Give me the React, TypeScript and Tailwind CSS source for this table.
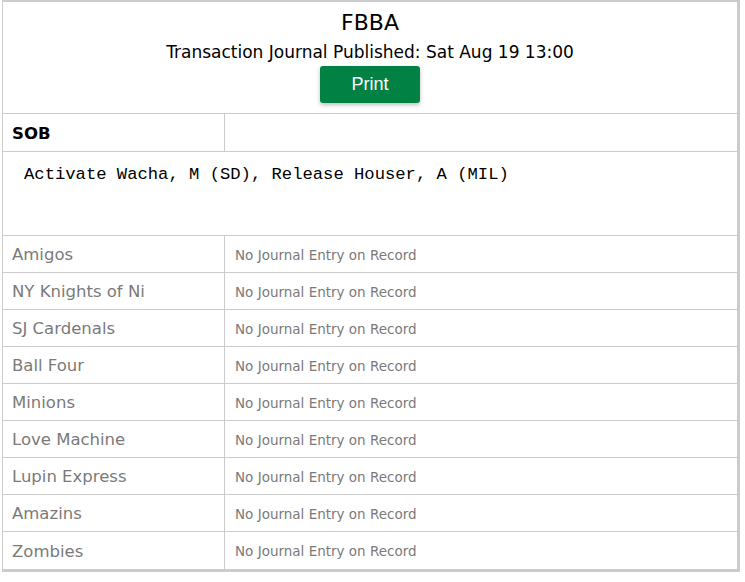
import React from "react";

const teams = [
  "Amigos",
  "NY Knights of Ni",
  "SJ Cardenals",
  "Ball Four",
  "Minions",
  "Love Machine",
  "Lupin Express",
  "Amazins",
  "Zombies",
];

export default function App() {
  return (
    <div className="w-[745px] h-[582px] bg-white" style={{ fontFamily: '"DejaVu Sans", Verdana, sans-serif' }}>
      <div className="ml-[2px] w-[738px] border-l border-t-2 border-r-[3px] border-b-[3px] border-[#cccccc] bg-white">
        <div className="h-[112px] flex flex-col items-center border-b border-[#cccccc]">
          <div className="mt-[7px] text-[22px] leading-[28px] text-black">FBBA</div>
          <div className="mt-[4px] text-[17px] leading-[22px] text-black">Transaction Journal Published: Sat Aug 19 13:00</div>
          <button
            className="mt-[3px] w-[100px] h-[37px] rounded-[3px] bg-[#018144] text-white text-[18px] shadow-[0_2px_4px_rgba(0,0,0,0.25)]"
            style={{ fontFamily: '"Liberation Sans", Arial, sans-serif' }}
          >
            Print
          </button>
        </div>
        <div className="flex h-[38px] border-b border-[#cccccc]">
          <div className="w-[222px] border-r border-[#cccccc] pl-[9px] pt-[3px] flex items-center text-[16.5px] font-bold text-black">SOB</div>
          <div className="flex-1" />
        </div>
        <div className="h-[84px] border-b border-[#cccccc] pl-[21px] pt-[12px]">
          <div className="text-[17.2px] leading-[22px] text-black" style={{ fontFamily: '"Liberation Mono", "DejaVu Sans Mono", monospace' }}>
            Activate Wacha, M (SD), Release Houser, A (MIL)
          </div>
        </div>
        {teams.map((t, i) => (
          <div key={t} className={`flex h-[37px] ${i < teams.length - 1 ? "border-b border-[#cccccc]" : ""}`}>
            <div className="w-[222px] border-r border-[#cccccc] pl-[9px] pt-[3px] flex items-center text-[16.5px] text-[#7a7a7a]">{t}</div>
            <div className="flex-1 pl-[10px] pt-[2px] flex items-center text-[13.5px] text-[#7a7a7a]">No Journal Entry on Record</div>
          </div>
        ))}
      </div>
    </div>
  );
}
